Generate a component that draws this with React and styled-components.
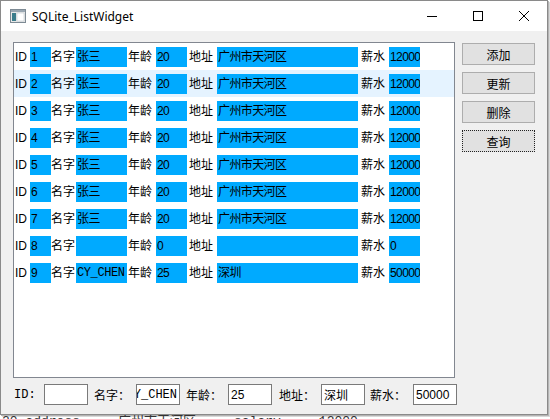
import React from 'react';
import styled, { createGlobalStyle } from 'styled-components';

const GlobalStyle = createGlobalStyle`
  html, body {
    margin: 0;
    padding: 0;
    background: #ffffff;
  }
  body {
    font-family: "Liberation Sans", "Noto Sans CJK SC", sans-serif;
    font-size: 12px;
    color: #000;
  }
`;

const rows = [
  { id: '1', name: '张三', age: '20', addr: '广州市天河区', salary: '12000' },
  { id: '2', name: '张三', age: '20', addr: '广州市天河区', salary: '12000', hover: true },
  { id: '3', name: '张三', age: '20', addr: '广州市天河区', salary: '12000' },
  { id: '4', name: '张三', age: '20', addr: '广州市天河区', salary: '12000' },
  { id: '5', name: '张三', age: '20', addr: '广州市天河区', salary: '12000' },
  { id: '6', name: '张三', age: '20', addr: '广州市天河区', salary: '12000' },
  { id: '7', name: '张三', age: '20', addr: '广州市天河区', salary: '12000' },
  { id: '8', name: '', age: '0', addr: '', salary: '0' },
  { id: '9', name: 'CY_CHEN', age: '25', addr: '深圳', salary: '50000', mono: true },
];

function App() {
  return (
    <>
      <GlobalStyle />
      <Window>
        <TitleBar>
          <AppIcon width="16" height="14" viewBox="0 0 16 14">
            <rect x="0.5" y="0.5" width="15" height="13" fill="#e8e8e8" stroke="#7d8a94" />
            <rect x="1" y="1" width="14" height="2" fill="#9aa7b2" />
            <rect x="2" y="4" width="4" height="8" fill="#3c7d8c" />
            <rect x="7" y="4" width="7" height="8" fill="#ffffff" stroke="#b5bec6" strokeWidth="0.5" />
          </AppIcon>
          <Title>SQLite_ListWidget</Title>
          <Controls>
            <Ctrl>
              <svg width="10" height="10" viewBox="0 0 10 10">
                <line x1="0" y1="5.5" x2="10" y2="5.5" stroke="#000" strokeWidth="1" />
              </svg>
            </Ctrl>
            <Ctrl>
              <svg width="10" height="10" viewBox="0 0 10 10">
                <rect x="0.5" y="0.5" width="9" height="9" fill="none" stroke="#000" strokeWidth="1" />
              </svg>
            </Ctrl>
            <Ctrl>
              <svg width="10" height="10" viewBox="0 0 10 10">
                <line x1="0" y1="0" x2="10" y2="10" stroke="#000" strokeWidth="1" />
                <line x1="10" y1="0" x2="0" y2="10" stroke="#000" strokeWidth="1" />
              </svg>
            </Ctrl>
          </Controls>
        </TitleBar>

        <Body>
          <TopArea>
            <ListBox>
              {rows.map((r) => (
                <Row key={r.id} $hover={r.hover}>
                  <Label $w={16} $pl={1}>ID</Label>
                  <Cell $w={21}>{r.id}</Cell>
                  <Label $w={25}>名字</Label>
                  <Cell $w={51} $mono={r.mono}>{r.name}</Cell>
                  <Label $w={29} $pl={1}>年龄</Label>
                  <Cell $w={31}>{r.age}</Cell>
                  <Label $w={30} $pl={2}>地址</Label>
                  <Cell $w={141}>{r.addr}</Cell>
                  <Label $w={31} $pl={3}>薪水</Label>
                  <Cell $w={31}>{r.salary}</Cell>
                </Row>
              ))}
            </ListBox>
            <ButtonColumn>
              <PushButton>添加</PushButton>
              <PushButton>更新</PushButton>
              <PushButton>删除</PushButton>
              <PushButton $focus>查询</PushButton>
            </ButtonColumn>
          </TopArea>

          <FormRow>
            <FieldLabel $w={30} $mono>ID:</FieldLabel>
            <LineEdit />
            <FieldLabel $w={42}>名字：</FieldLabel>
            <LineEdit $end $mono>CY_CHEN</LineEdit>
            <FieldLabel $w={42}>年龄：</FieldLabel>
            <LineEdit>25</LineEdit>
            <FieldLabel $w={42} $ml={7}>地址：</FieldLabel>
            <LineEdit>深圳</LineEdit>
            <FieldLabel $w={43} $ml={5}>薪水：</FieldLabel>
            <LineEdit>50000</LineEdit>
          </FormRow>
        </Body>
      </Window>
      <Behind>
        <span>20 address</span>
        <span>广州市天河区</span>
        <span>salary</span>
        <span>12000</span>
      </Behind>
    </>
  );
}

export default App;

const Window = styled.div`
  width: 548px;
  height: 415px;
  box-sizing: border-box;
  border: 1px solid #8a8a8a;
  box-shadow: 1px 1px 0 #b4b4b4, 2px 2px 0 #d8d8d8;
  display: flex;
  flex-direction: column;
  background: #f0f0f0;
`;

const TitleBar = styled.div`
  height: 30px;
  background: #ffffff;
  display: flex;
  align-items: center;
  flex-shrink: 0;
`;

const AppIcon = styled.svg`
  margin-left: 9px;
  margin-right: 6px;
`;

const Title = styled.div`
  font-family: "Noto Sans", "Liberation Sans", sans-serif;
  font-size: 12px;
  color: #000;
  flex: 1;
`;

const Controls = styled.div`
  display: flex;
  height: 100%;
`;

const Ctrl = styled.div`
  width: 46px;
  height: 100%;
  display: flex;
  align-items: center;
  justify-content: center;
`;

const Body = styled.div`
  flex: 1;
  padding: 11px 0 0 12px;
  display: flex;
  flex-direction: column;
`;

const TopArea = styled.div`
  display: flex;
  align-items: flex-start;
`;

const ListBox = styled.div`
  width: 442px;
  height: 336px;
  box-sizing: border-box;
  border: 1px solid #828790;
  background: #ffffff;
  display: flex;
  flex-direction: column;
`;

const Row = styled.div`
  height: 27px;
  display: flex;
  align-items: center;
  background: ${(p) => (p.$hover ? '#e5f3ff' : 'transparent')};
  font-family: "Liberation Sans", "Noto Sans CJK SC", sans-serif;
  font-size: 12px;
  white-space: nowrap;
`;

const Label = styled.div`
  width: ${(p) => p.$w}px;
  padding-left: ${(p) => p.$pl || 0}px;
  box-sizing: border-box;
  line-height: 20px;
  overflow: hidden;
`;

const Cell = styled.div`
  width: ${(p) => p.$w}px;
  height: 20px;
  line-height: 20px;
  background: #00aaff;
  padding-left: 1px;
  box-sizing: border-box;
  overflow: hidden;
  font-family: ${(p) =>
    p.$mono
      ? '"Liberation Mono", "Noto Sans CJK SC", monospace'
      : '"Liberation Sans", "Noto Sans CJK SC", sans-serif'};
  letter-spacing: ${(p) => (p.$mono ? '-0.4px' : '-0.6px')};
`;

const ButtonColumn = styled.div`
  display: flex;
  flex-direction: column;
  gap: 7px;
  margin-left: 7px;
  padding-top: 1px;
`;

const PushButton = styled.div`
  width: 73px;
  height: 22px;
  box-sizing: border-box;
  border: 1px ${(p) => (p.$focus ? 'dotted #222' : 'solid #adadad')};
  background: #e1e1e1;
  display: flex;
  align-items: center;
  justify-content: center;
  font-family: "Noto Sans CJK SC", sans-serif;
  font-size: 12px;
  color: #000;
`;

const FormRow = styled.div`
  display: flex;
  align-items: center;
  margin-top: 6px;
  height: 21px;
`;

const FieldLabel = styled.div`
  width: ${(p) => p.$w}px;
  margin-left: ${(p) => (p.$ml !== undefined ? p.$ml : p.$mono ? 1 : 6)}px;
  font-family: ${(p) =>
    p.$mono
      ? '"Liberation Mono", monospace'
      : '"Noto Sans CJK SC", sans-serif'};
  font-size: 12px;
  white-space: nowrap;
`;

const LineEdit = styled.div`
  width: 44px;
  height: 21px;
  box-sizing: border-box;
  border: 1px solid #7a7a7a;
  background: #ffffff;
  padding: 0 2px;
  display: flex;
  align-items: center;
  justify-content: ${(p) => (p.$end ? 'flex-end' : 'flex-start')};
  overflow: hidden;
  white-space: nowrap;
  font-family: ${(p) =>
    p.$mono
      ? '"Liberation Mono", monospace'
      : '"Liberation Sans", "Noto Sans CJK SC", sans-serif'};
  font-size: 12px;
`;

const Behind = styled.div`
  height: 4px;
  overflow: hidden;
  display: flex;
  gap: 38px;
  padding-left: 2px;
  font-family: "Liberation Mono", "Noto Sans CJK SC", monospace;
  font-size: 13px;
  line-height: 14px;
  color: #333;
  & > span {
    margin-top: 0;
  }
`;
